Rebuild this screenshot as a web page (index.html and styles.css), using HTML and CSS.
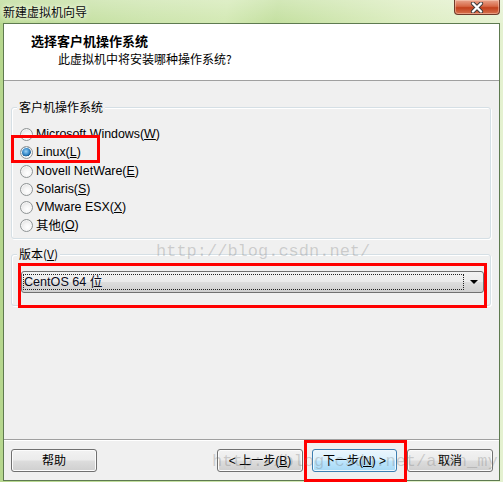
FILE: index.html
```html
<!DOCTYPE html>
<html>
<head>
<meta charset="utf-8">
<link rel="stylesheet" href="styles.css">
</head>
<body>
<div class="window">
  <div class="titlebar">
    <span class="title">新建虚拟机向导</span>
    <div class="close">
      <svg width="18" height="11" viewBox="0 0 18 11"><path d="M5 1.5 L13 9.5 M13 1.5 L5 9.5" stroke="#3b3b3b" stroke-width="4.2" stroke-linecap="round"/><path d="M5 1.5 L13 9.5 M13 1.5 L5 9.5" stroke="#ffffff" stroke-width="2.4" stroke-linecap="round"/></svg>
    </div>
  </div>
  <div class="client">
    <div class="header">
      <div class="h-title">选择客户机操作系统</div>
      <div class="h-sub">此虚拟机中将安装哪种操作系统?</div>
    </div>
    <div class="content">
      <div class="group group-os">
        <span class="legend">客户机操作系统</span>
        <div class="radios">
          <label class="radio"><span class="dot"></span>Microsoft Windows(<u>W</u>)</label>
          <label class="radio"><span class="dot checked"></span>Linux(<u>L</u>)</label>
          <label class="radio"><span class="dot"></span>Novell NetWare(<u>E</u>)</label>
          <label class="radio"><span class="dot"></span>Solaris(<u>S</u>)</label>
          <label class="radio"><span class="dot"></span>VMware ESX(<u>X</u>)</label>
          <label class="radio"><span class="dot"></span>其他(<u>O</u>)</label>
        </div>
      </div>
      <div class="group group-ver">
        <span class="legend">版本(<u>V</u>)</span>
        <div class="combo">
          <div class="combo-focus">CentOS 64 位</div>
          <div class="combo-arrow"></div>
        </div>
      </div>
    </div>
    <div class="footer">
      <div class="btn">帮助</div>
      <div class="spacer"></div>
      <div class="btn">&lt; 上一步(<u>B</u>)</div>
      <div class="btn btn-next">下一步(<u>N</u>) &gt;</div>
      <div class="btn">取消</div>
    </div>
  </div>
  <div class="mark mark-1"></div>
  <div class="mark mark-2"></div>
  <div class="mark mark-3"></div>
  <div class="wm wm-1">http://blog.csdn.net/</div>
  <div class="wm wm-2">http://blog.csdn.net/alan_my</div>
</div>
</body>
</html>
```
FILE: styles.css
```css
* { box-sizing: border-box; }
html, body { margin: 0; padding: 0; }
body {
  width: 503px;
  height: 482px;
  overflow: hidden;
  font-family: "Liberation Sans", "Noto Sans CJK SC", sans-serif;
  font-size: 12px;
  color: #000;
}
u { text-decoration: underline; text-underline-offset: 1px; }
.window {
  position: relative;
  width: 503px;
  height: 482px;
  display: flex;
  flex-direction: column;
  background: linear-gradient(90deg, #b6d78e 0%, #c8e2a6 40%, #dcedc2 75%, #e4f1d0 100%);
}
.titlebar {
  height: 23px;
  display: flex;
  justify-content: space-between;
  align-items: flex-start;
  background:
    linear-gradient(180deg, rgba(255,255,255,0.25) 0%, rgba(255,255,255,0) 100%),
    linear-gradient(100deg, #bcdb96 0%, #cde5ad 30%, #d3e9b4 45%, #c4e0a0 55%, #dcedc0 80%, #e6f2d3 100%);
}
.title {
  font-family: "Noto Sans CJK SC", sans-serif;
  font-size: 12px;
  line-height: 16px;
  margin: 4px 0 0 3px;
  color: #0b0b0b;
  text-shadow: 0 0 4px #f4fae8, 0 0 6px #f4fae8;
}
.close {
  width: 46px;
  height: 15px;
  margin-right: 3px;
  border: 1px solid #6e3a2a;
  border-top: none;
  border-radius: 0 0 4px 4px;
  background: linear-gradient(180deg, #e9a48d 0%, #d76846 45%, #c2401c 55%, #d7724f 100%);
  display: flex;
  align-items: center;
  justify-content: center;
  box-shadow: inset 0 0 0 1px rgba(255,220,200,0.45);
}
.client {
  flex: 1;
  margin: 0 3px 1px 3px;
  border: 1px solid #5e7a50;
  background: #f0f0f0;
  display: flex;
  flex-direction: column;
}
.header {
  height: 57px;
  background: #fff;
  border-bottom: 1px solid #a0a0a0;
  padding: 9px 0 0 27px;
  font-family: "Noto Sans CJK SC", sans-serif;
}
.h-title {
  font-size: 13px;
  font-weight: bold;
  line-height: 16px;
}
.h-sub {
  font-size: 12px;
  line-height: 16px;
  margin: 2px 0 0 27px;
}
.content {
  flex: 1;
  padding: 26px 8px 0 7px;
}
.group {
  border: 1px solid #d5dfe5;
  border-radius: 3px;
  box-shadow: inset 1px 1px 0 #fff, 1px 1px 0 #fff;
}
.legend {
  display: block;
  width: max-content;
  font-family: "Noto Sans CJK SC", sans-serif;
  line-height: 16px;
  height: 16px;
  margin: -9px 0 0 5px;
  padding: 0 2px;
  background: #f0f0f0;
}
.group-os {
  height: 132px;
}
.radios {
  padding: 0 0 0 8px;
  margin-top: 10px;
}
.radio {
  display: flex;
  align-items: center;
  height: 18px;
  white-space: nowrap;
  font-size: 12.4px;
}
.radio:nth-child(3) { margin-top: 1px; }
.dot {
  width: 13px;
  height: 13px;
  margin-right: 3px;
  border-radius: 50%;
  border: 1px solid #8f9495;
  background: radial-gradient(circle at 60% 65%, #ffffff 0%, #f4f4f4 40%, #d5d5d5 100%);
  box-shadow: inset 0 0 0 1px #f6f6f6;
  flex: none;
}
.dot.checked {
  background:
    radial-gradient(circle at 45% 40%, #9fd3f5 0%, #3b8fce 35%, #1c5b8d 55%, transparent 58%),
    radial-gradient(circle at 60% 65%, #ffffff 0%, #f4f4f4 40%, #d5d5d5 100%);
}
.group-ver {
  margin-top: 15px;
  height: 52px;
}
.combo {
  position: relative;
  margin: 9px 6px 0 9px;
  height: 22px;
  border: 1px solid #707070;
  border-radius: 3px;
  background: linear-gradient(180deg, #f2f2f2 0%, #ebebeb 49%, #dddddd 51%, #cfcfcf 100%);
  display: flex;
  align-items: center;
  padding: 0 0 0 1px;
}
.combo-focus {
  flex: 1;
  height: 16px;
  margin-right: 19px;
  border: 1px dotted #222;
  line-height: 14px;
  padding-left: 0;
  font-size: 12.6px;
  font-family: "Liberation Sans", "Noto Sans CJK SC", sans-serif;
  color: #0a0a1a;
}
.combo-arrow {
  position: absolute;
  right: 5px;
  top: 8px;
  width: 0;
  height: 0;
  border-left: 4px solid transparent;
  border-right: 4px solid transparent;
  border-top: 4px solid #000;
}
.footer {
  height: 41px;
  border-top: 1px solid #a0a0a0;
  display: flex;
  align-items: flex-start;
  padding: 9px 6px 0 7px;
  gap: 10px;
  box-shadow: inset 0 1px 0 #fff;
}
.spacer { flex: 1; }
.btn {
  width: 86px;
  height: 23px;
  border: 1px solid #707070;
  border-radius: 3px;
  background: linear-gradient(180deg, #f2f2f2 0%, #ebebeb 49%, #dddddd 51%, #cfcfcf 100%);
  box-shadow: inset 0 0 0 1px #fcfcfc;
  display: flex;
  align-items: center;
  justify-content: center;
  font-family: "Liberation Sans", "Noto Sans CJK SC", sans-serif;
  line-height: 16px;
  white-space: nowrap;
}
.btn-next {
  margin-left: -1px;
  width: 85px;
  border-color: #3c7fb1;
  background: linear-gradient(180deg, #eaf6fd 0%, #d9f0fc 49%, #bee6fd 51%, #a7d9f5 100%);
  box-shadow: inset 0 0 0 1px #eef8fe;
}
.mark {
  position: absolute;
  border: 3px solid #ff0000;
}
.mark-1 { left: 11px; top: 135px; width: 89px; height: 28px; }
.mark-2 { left: 18px; top: 263px; width: 469px; height: 45px; }
.mark-3 { left: 304px; top: 440px; width: 103px; height: 42px; }
.wm {
  position: absolute;
  font-family: "Liberation Mono", monospace;
  font-size: 17px;
  line-height: 20px;
  color: rgba(110, 110, 110, 0.28);
  white-space: nowrap;
  pointer-events: none;
}
.wm-1 { left: 156px; top: 242px; }
.wm-2 { left: 212px; top: 452px; }
```
